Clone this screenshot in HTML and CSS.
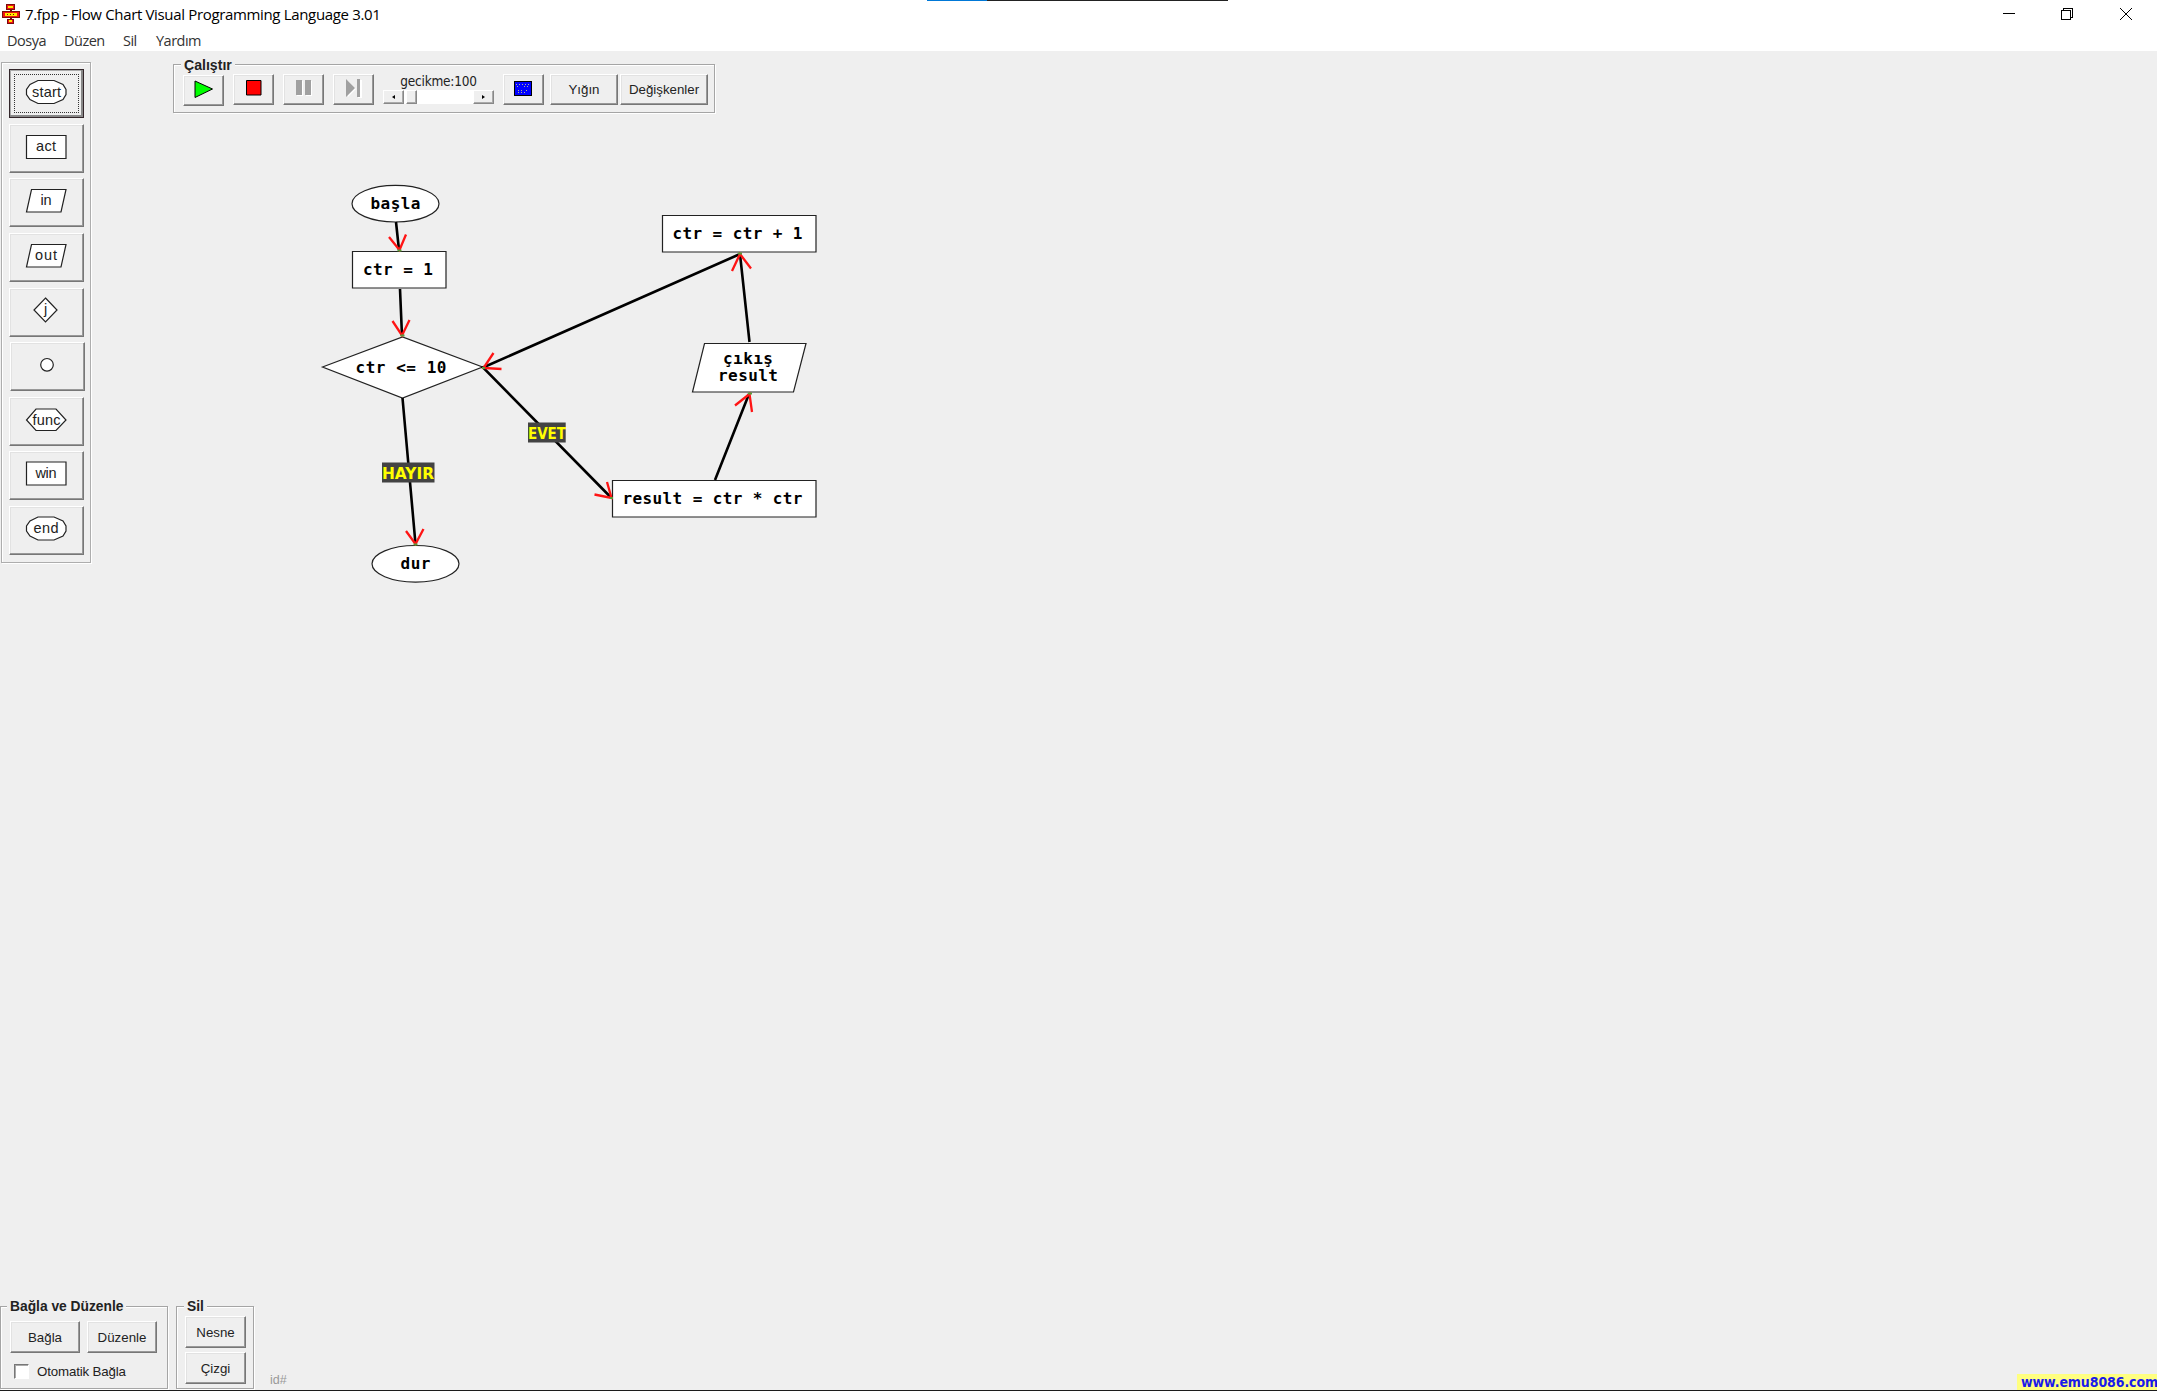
FILE: index.html
```html
<!DOCTYPE html>
<html lang="tr">
<head>
<meta charset="utf-8">
<title>7.fpp - Flow Chart Visual Programming Language 3.01</title>
<link rel="stylesheet" href="styles.css">
</head>
<body>
<div class="app">
  <div class="progress"></div>
  <header class="titlebar">
    <svg class="logo" width="18" height="21" viewBox="0 0 18 21" shape-rendering="crispEdges">
      <path d="M4 0h9v6h-9zM8 6h2v1h-2zM0 7h18v7h-18zM8 14h2v1h-2zM5 15h7v5h-7z" fill="#7c0b0b"/>
      <path d="M5 1h7v4h-7zM1 8h16v5h-16zM6 16h5v3h-5z" fill="#f01414"/>
      <path d="M6 2h5v2h-5zM3 9h12v3h-12zM7 16h3v2h-3z" fill="#ffe800"/>
      <path d="M5 10h1v1h-1zM8 10h1v1h-1zM11 10h1v1h-1z" fill="#7c0b0b"/>
    </svg>
    <h1 class="title">7.fpp - Flow Chart Visual Programming Language 3.01</h1>
    <svg class="winctl" width="130" height="14" viewBox="0 0 130 14" fill="none" stroke="#000" shape-rendering="crispEdges">
      <path d="M0 6.5h12M58.500 3.500h9v9h-9zM60.500 3.500v-2h9v9h-2"/>
      <path d="M117 1l12 12M129 1l-12 12" shape-rendering="auto"/>
    </svg>
  </header>
  <nav class="menubar"><span class="m1">Dosya</span><span class="m2">Düzen</span><span class="m3">Sil</span><span class="m4">Yardım</span></nav>
  <main class="workspace">
    <div class="top">
      <aside class="toolbox">
        <button class="btn tool focused"><svg class="shape" viewBox="0 0 41 24"><path d="M12 .5h16l9 4 3 5v5l-3 5-9 4h-16l-8-4-3.500-5v-5l3.500-5z"/><text x="20.500" y="16.500" textLength="29">start</text></svg></button>
        <button class="btn tool"><svg class="shape" viewBox="0 0 41 24"><path d="M.5 .5h39.500v23h-39.500z"/><text x="20" y="15.500" textLength="20">act</text></svg></button>
        <button class="btn tool"><svg class="shape" viewBox="0 0 41 24"><path d="M5.500 .5h34.500l-5 22.500h-34.500z"/><text x="20" y="16" textLength="11">in</text></svg></button>
        <button class="btn tool"><svg class="shape" viewBox="0 0 41 24"><path d="M5.500 .5h34.500l-5 22.500h-34.500z"/><text x="20" y="16" textLength="22">out</text></svg></button>
        <button class="btn tool"><svg class="shape" viewBox="0 0 41 24"><path d="M19.500 -1l11.500 12-11.500 12-11.500-12z"/><text x="19.500" y="15">j</text></svg></button>
        <button class="btn tool shifted"><svg class="shape" viewBox="0 0 41 24"><circle cx="20" cy="11.800" r="6.300"/></svg></button>
        <button class="btn tool"><svg class="shape" viewBox="0 0 41 24"><path d="M10 1h20l10 11-10 10.500h-20l-9.500-10.500z"/><text x="20.500" y="17" textLength="28">func</text></svg></button>
        <button class="btn tool"><svg class="shape" viewBox="0 0 41 24"><path d="M.5 0h39.500v23h-39.500z"/><text x="20" y="16" textLength="21">win</text></svg></button>
        <button class="btn tool"><svg class="shape" viewBox="0 0 41 24"><path d="M12 0h16l9 4 3 5v5l-3 5-9 4h-16l-8-4-3.500-5v-5l3.500-5z"/><text x="20" y="16" textLength="25">end</text></svg></button>
      </aside>
      <section class="group run">
        <h2 class="legend">Çalıştır</h2>
        <button class="btn ico play"><svg width="20" height="19" viewBox="0 0 20 19"><path d="M1 1v16.500l17.500-8.500z" fill="#0f0" stroke="#000"/></svg></button>
        <button class="btn ico"><svg width="16" height="16" viewBox="0 0 16 16"><path d="M.5 .5h14.500v14.500h-14.500z" fill="red" stroke="#000"/></svg></button>
        <button class="btn ico"><svg width="16" height="16" viewBox="0 0 16 16"><path d="M1 1h6v15h-6zM10 1h6v15h-6z" fill="#fff"/><path d="M0 0h6v15h-6zM9 0h6v15h-6z" fill="#a0a0a0"/></svg></button>
        <button class="btn ico"><svg width="16" height="19" viewBox="0 0 16 19"><path d="M2 2v16l8-8zM12 1h4v18h-4z" fill="#fff"/><path d="M0 0v18l9-9zM11 0h3v18h-3z" fill="#a0a0a0"/></svg></button>
        <div class="delay">
          <span class="delay-label">gecikme:100</span>
          <div class="scroll">
            <span class="arrow"><svg width="3" height="4" viewBox="0 0 3 4"><path d="M3 0v4l-3-2z"/></svg></span>
            <span class="thumb"></span><span class="track"></span>
            <span class="arrow"><svg width="3" height="4" viewBox="0 0 3 4"><path d="M0 0v4l3-2z"/></svg></span>
          </div>
        </div>
        <button class="btn ico screen"><svg width="18" height="15" viewBox="0 0 18 15" shape-rendering="crispEdges"><path d="M.5 .5h17v14h-17z" fill="#00f" stroke="#000"/><path d="M2 3.500h14M3 5.500h3M10 5.500h6M4 9.500h6M12 9.500h3M4 11.500h8" stroke="#b4b48c" stroke-dasharray="1 2"/></svg></button>
        <button class="btn stack">Yığın</button>
        <button class="btn vars">Değişkenler</button>
      </section>
    </div>
    <svg class="chart" width="520" height="420" viewBox="310 175 520 420">
      <g class="node">
        <ellipse cx="395.500" cy="203.700" rx="43.500" ry="18.300"/>
        <path d="M352.500 251.500h93.500v36.500h-93.500zM322.500 367l80-30 80 30-80 31zM662.500 215.500h153.500v36.500h-153.500zM704.500 343.500h101.500l-12.500 48.500h-101zM612.500 480.500h203.500v36.500h-203.500z"/>
        <ellipse cx="415.500" cy="563.800" rx="43.500" ry="18.300"/>
      </g>
      <path class="link" d="M396 222l3 28M400 289l2 47M740 254l-257 113.500 128 130M402.500 398l13 146M715 480l34-86M749.500 342l-9.500-88"/>
      <path class="head" d="M389 237l10.500 13 6.500-15.500M392.500 321l9.500 14.500 7.500-15.500M493.500 353l-10 15 18 1M607 482l4.500 16-17-3.500M406 531l9.500 13 8-15M732 271l8-17 11 14.500M735 405.500l14.500-11.500 2.500 18"/>
      <path class="port" d="M397.500 250.500h4M400.500 335.500h4M482 368h3M738 253.500h4M748 393.500h4M610 498h3M413.500 544.500h4"/>
      <g class="code">
        <text x="370.500" y="209" textLength="50">başla</text>
        <text x="363" y="275" textLength="70">ctr = 1</text>
        <text x="355.500" y="373" textLength="91">ctr &lt;= 10</text>
        <text x="672.500" y="238.500" textLength="130">ctr = ctr + 1</text>
        <text x="723" y="364" textLength="50">çıkış</text>
        <text x="718" y="381" textLength="60">result</text>
        <text x="622.500" y="503.500" textLength="180">result = ctr * ctr</text>
        <text x="400.500" y="569" textLength="30">dur</text>
      </g>
      <path class="tag" d="M382 462.500h52.500v20h-52.500zM528 422.500h37.700v20h-37.700z"/>
      <g class="branch">
        <text x="382" y="479" textLength="52" lengthAdjust="spacingAndGlyphs">HAYIR</text>
        <text x="528" y="439" textLength="38" lengthAdjust="spacingAndGlyphs">EVET</text>
      </g>
    </svg>
    <footer class="bottom">
      <section class="group edit">
        <h2 class="legend">Bağla ve Düzenle</h2>
        <div class="pair"><button class="btn">Bağla</button><button class="btn">Düzenle</button></div>
        <label class="auto"><span class="check"></span>Otomatik Bağla</label>
      </section>
      <section class="group delete">
        <h2 class="legend">Sil</h2>
        <button class="btn">Nesne</button>
        <button class="btn">Çizgi</button>
      </section>
      <span class="ident">id#</span>
      <a class="site">www.emu8086.com</a>
    </footer>
  </main>
</div>
</body>
</html>
```
FILE: styles.css
```css
* { box-sizing: border-box; }
body { margin: 0; background: #efefef; overflow: hidden; font: 13.3px "Liberation Sans", Arial, sans-serif; color: #222; }
.app { height: 1391px; display: flex; flex-direction: column; background: #efefef; border-bottom: 1px solid #1c1c1c; position: relative; }
.progress { position: absolute; top: 0; left: 927px; width: 301px; height: 1px; background: linear-gradient(90deg, #0078d7 60px, #222 60px); }
.titlebar { height: 29px; flex: none; display: flex; align-items: flex-start; background: #fff; padding: 4px 24px 0 2px; }
.logo { flex: none; }
.title { margin: 0 auto 0 5px; font: 15px/20px "Open Sans", "Noto Sans", sans-serif; letter-spacing: -0.34px; color: #000; white-space: nowrap; }
.winctl { margin: 3px 0 0; }
.menubar { height: 22px; flex: none; display: flex; background: #fff; padding-left: 7px; font: 14.5px/24px "Open Sans", "Noto Sans", sans-serif; letter-spacing: -0.5px; color: #333; }
.menubar span { flex: none; white-space: nowrap; }
.m1 { width: 57px; }
.m2 { width: 59px; }
.m3 { width: 33px; }
.workspace { flex: 1; position: relative; display: flex; flex-direction: column; justify-content: space-between; }
.top { display: flex; align-items: flex-start; padding-top: 11px; }
.toolbox { width: 90px; height: 501px; margin-left: 1px; border: 1px solid #adadad; box-shadow: inset 1px 1px #fff, 1px 1px #fff; padding: 6px 0 7px 7px; display: flex; flex-direction: column; justify-content: space-between; }
.btn { margin: 0; padding: 0; flex: none; display: flex; align-items: center; justify-content: center; background: #efefef; border: 1px solid; border-color: #fff #777 #777 #fff; box-shadow: inset -1px -1px #999, inset 1px 1px #e2e2e2; color: #222; font: inherit; white-space: nowrap; }
.tool { width: 75px; height: 49px; padding-bottom: 3px; }
.tool.focused { border: 1px solid #33262a; box-shadow: inset -2px -2px #888, inset 1px 1px #aaa; outline: 1px dotted #333; outline-offset: -6px; }
.tool.shifted { margin-left: 1px; }
.shape { width: 41px; height: 24px; overflow: visible; fill: #fff; stroke: #222; stroke-width: 1.200; }
.shape text { fill: #222; stroke: none; text-anchor: middle; font-size: 14.5px; }
.group { position: relative; border: 1px solid #a5a5a5; box-shadow: inset 1px 1px #fff, 1px 1px #fff; }
.legend { position: absolute; top: -8px; left: 7px; margin: 0; padding: 0 3px; background: #efefef; font-size: 13.8px; line-height: 16px; color: #222; white-space: nowrap; }
.run { width: 542px; height: 49px; margin: 2px 0 0 82px; display: flex; padding: 9px 0 0 9px; }
.run .legend { font-size: 14.1px; }
.ico { width: 41px; height: 31px; margin-right: 9px; padding-bottom: 3px; }
.play { margin-top: 1px; }
.delay { width: 111px; margin-right: 9px; display: flex; flex-direction: column; }
.delay-label { font: 13.5px/15px "DejaVu Sans Condensed", "DejaVu Sans", sans-serif; letter-spacing: -0.22px; text-align: center; height: 16px; white-space: nowrap; }
.scroll { display: flex; height: 14px; background: #fff; }
.arrow, .thumb { background: #efefef; border: 1px solid; border-color: #fff #888 #888 #fff; box-shadow: inset -1px -1px #aaa; }
.arrow { width: 21px; display: flex; align-items: center; justify-content: center; }
.thumb { width: 11px; margin-left: 2px; }
.track { flex: 1; }
.screen { margin-right: 6px; padding-right: 1px; }
.stack { width: 68px; height: 31px; margin-right: 2px; }
.vars { width: 88px; height: 31px; }
.chart { position: absolute; left: 310px; top: 124px; }
.node { fill: #fff; stroke: #222; stroke-width: 1.200; }
.link { fill: none; stroke: #000; stroke-width: 2.600; }
.head { fill: none; stroke: #ff1414; stroke-width: 2.300; }
.port { stroke: #5a9a3a; stroke-width: 2; }
.code { font: bold 16px "DejaVu Sans Mono", monospace; fill: #000; }
.tag { fill: #434343; }
.branch { font: bold 15px "DejaVu Sans", sans-serif; fill: #ff0; }
.bottom { display: flex; align-items: flex-end; height: 84px; }
.edit { width: 168px; height: 83px; margin-bottom: 1px; padding: 14px 0 0 9px; }
.pair { display: flex; gap: 7px; }
.pair .btn { width: 70px; height: 32px; }
.auto { display: flex; align-items: center; gap: 8px; padding-left: 4px; margin-top: 11px; white-space: nowrap; letter-spacing: -0.15px; }
.check { width: 15px; height: 15px; background: #fff; border: 1px solid; border-color: #777 #fff #fff #777; box-shadow: inset 1px 1px #aaa; }
.delete { width: 78px; height: 83px; margin: 0 0 1px 8px; padding: 9px 0 0 8px; display: flex; flex-direction: column; gap: 4px; }
.delete .btn { width: 61px; height: 32px; }
.ident { margin: 0 auto 2px 16px; line-height: 15px; color: #999; font-size: 12.5px; }
.site { width: 140px; height: 16px; padding-left: 4px; overflow: hidden; background: #ffff80; color: #1a1aea; font: bold 14px/17px "DejaVu Sans Condensed", "DejaVu Sans", sans-serif; letter-spacing: -0.1px; white-space: nowrap; }
.edit .legend { left: 6px; }
```
